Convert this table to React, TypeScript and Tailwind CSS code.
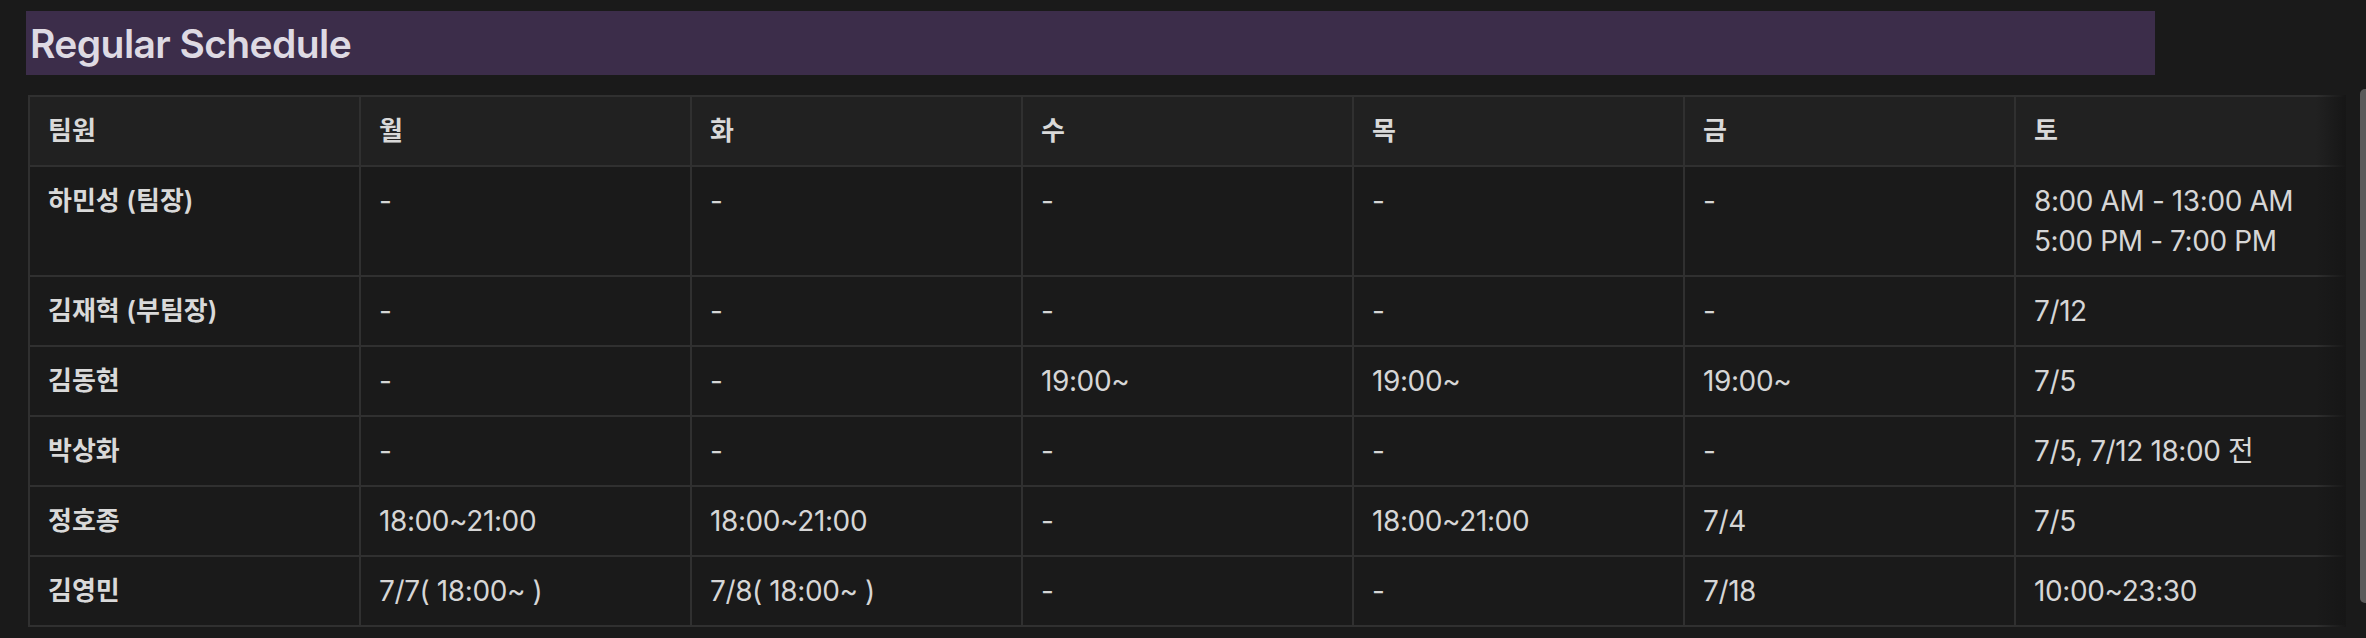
import React from "react";

const headers = ["팀원", "월", "화", "수", "목", "금", "토"];

type Cell = string | string[];

const rows: Cell[][] = [
  ["하민성 (팀장)", "-", "-", "-", "-", "-", ["8:00 AM - 13:00 AM", "5:00 PM - 7:00 PM"]],
  ["김재혁 (부팀장)", "-", "-", "-", "-", "-", "7/12"],
  ["김동현", "-", "-", "19:00~", "19:00~", "19:00~", "7/5"],
  ["박상화", "-", "-", "-", "-", "-", "7/5, 7/12 18:00 전"],
  ["정호종", "18:00~21:00", "18:00~21:00", "-", "18:00~21:00", "7/4", "7/5"],
  ["김영민", "7/7( 18:00~ )", "7/8( 18:00~ )", "-", "-", "7/18", "10:00~23:30"],
];

export default function App() {
  return (
    <div
      className="relative w-[2366px] h-[638px] overflow-hidden bg-[#1a1a1a] text-[#d6d6d6]"
      style={{ fontFamily: 'Inter, "Noto Sans CJK KR", sans-serif' }}
    >
      <div className="pl-[26px] pt-[11px]">
        <div className="w-[2129px] h-[64px] bg-[#3c2d4a] flex items-center pl-[4px]">
          <h3 className="text-[39px] font-semibold tracking-[-0.6px] text-[#dedae3] leading-none">
            Regular Schedule
          </h3>
        </div>
        <div className="relative mt-[20px] ml-[2px] w-[2318px] overflow-hidden">
          <table className="border-collapse table-fixed w-[2318px]">
            <colgroup>
              {headers.map((h) => (
                <col key={h} className="w-[331px]" />
              ))}
            </colgroup>
            <thead>
              <tr className="bg-[#212121]">
                {headers.map((h) => (
                  <th
                    key={h}
                    className="border-2 border-[#303030] px-[18px] py-[14px] text-left text-[26px] leading-[40px] font-semibold text-[#d9d9d9]"
                  >
                    {h}
                  </th>
                ))}
              </tr>
            </thead>
            <tbody>
              {rows.map((r, ri) => (
                <tr key={ri} className="bg-[#1a1a1a]">
                  {r.map((c, ci) => (
                    <td
                      key={ci}
                      className={
                        ci === 0
                          ? "border-2 border-[#303030] px-[18px] py-[14px] align-top text-[26px] leading-[40px] font-semibold text-[#d9d9d9]"
                          : "border-2 border-[#303030] px-[18px] py-[14px] align-top text-[28px] leading-[40px] text-[#d6d6d6] tracking-[-0.4px]"
                      }
                    >
                      {Array.isArray(c) ? c.map((l) => <div key={l}>{l}</div>) : c}
                    </td>
                  ))}
                </tr>
              ))}
            </tbody>
          </table>
          <div className="absolute right-0 top-0 bottom-0 w-[30px] bg-gradient-to-r from-transparent to-[#161616]" />
        </div>
      </div>
      <div className="absolute right-[-4px] top-[89px] h-[514px] w-[10px] rounded-full bg-[#5a5a5a]" />
    </div>
  );
}
